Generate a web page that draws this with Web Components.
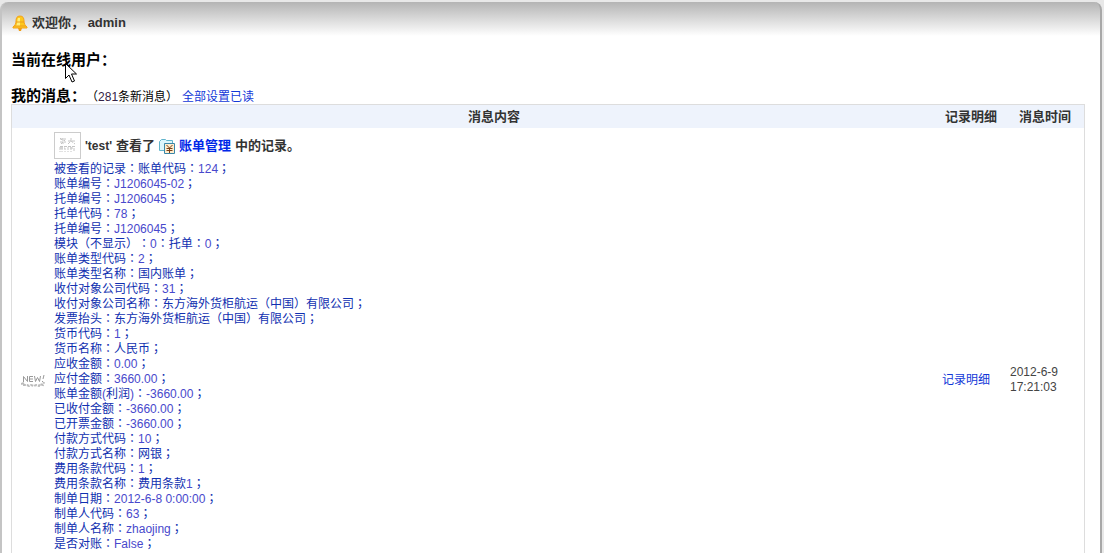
<!DOCTYPE html>
<html lang="zh-CN">
<head>
<meta charset="utf-8">
<title>我的消息</title>
<style>
  body {
    margin: 0;
    background: #e8e8e8;
    font: 12px/15px "Liberation Sans", "Noto Sans CJK SC", sans-serif;
    text-spacing-trim: space-all;
    color: #333;
  }
</style>
</head>
<body>
<user-panel name="admin">
  <online-users></online-users>
  <message-list></message-list>
</user-panel>
<mouse-pointer></mouse-pointer>

<script>
class BellIcon extends HTMLElement {
    constructor() {
        super();
        this.attachShadow({ mode: "open" }).innerHTML = `
        <style>
          :host { display: block; width: 16px; height: 16px; }
          svg { display: block; }
        </style>
        <svg width="16" height="16" viewBox="0 0 16 16">
          <path d="M8 1C5 1 4 3 4 6c0 3-1 4-3 6v1h14v-1c-2-2-3-3-3-6 0-3-1-5-4-5z" fill="#fdc81e" stroke="#f3a21c"/>
          <path d="M6 3c-1 2 0 5-2 8h4V3z" fill="#fff07a"/>
          <path d="M4 7h8M2 11h12" stroke="#ef9d1c" fill="none"/>
          <path d="M6 13h4l-1 3H7z" fill="#f09c14"/>
        </svg>`;
    }
}

class UserPanel extends HTMLElement {
    constructor() {
        super();
        this.attachShadow({ mode: "open" });
    }

    connectedCallback() {
        this.shadowRoot.innerHTML = `
        <style>
          :host {
            display: block;
            box-sizing: border-box;
            min-height: calc(100vh - 2px);
            margin: 2px 2px 0 0;
            padding: 0 15px 0 9px;
            border-left: 2px solid #c4c4c4;
            border-right: 2px solid #a8a8a8;
            border-radius: 8px 8px 0 0;
            background: linear-gradient(#b4b4b4, #fff 34px);
          }
          header {
            display: flex;
            align-items: center;
            gap: 4px;
            height: 42px;
            padding-left: 1px;
          }
          h1 { margin: 0; font-size: 13px; line-height: 20px; }
        </style>
        <header>
          <bell-icon></bell-icon>
          <h1>欢迎你， <span>${this.getAttribute("name")}</span></h1>
        </header>
        <slot></slot>`;
    }
}

class OnlineUsers extends HTMLElement {
    constructor() {
        super();
        this.attachShadow({ mode: "open" }).innerHTML = `
        <style>
          :host { display: block; height: 42px; }
          h2 { margin: 0; padding-top: 6px; font-size: 15px; line-height: 20px; color: #000; }
        </style>
        <h2>当前在线用户：</h2>`;
    }
}

class MessageList extends HTMLElement {
    constructor() {
        super();
        this.attachShadow({ mode: "open" });
    }

    // numbers and latin words are lighter, full width punctuation is centred
    markup(text) {
        return text
            .replace(/[：；（）]|[-\w.():]+(?: [\w:]+)?/g, part =>
                /[：；（）]/.test(part)
                    ? `<i lang="zh-TW">${part}</i>`
                    : `<span>${part}</span>`);
    }

    connectedCallback() {
        const records = [
            "被查看的记录：账单代码：124；",
            "账单编号：J1206045-02；",
            "托单编号：J1206045；",
            "托单代码：78；",
            "托单编号：J1206045；",
            "模块（不显示）：0：托单：0；",
            "账单类型代码：2；",
            "账单类型名称：国内账单；",
            "收付对象公司代码：31；",
            "收付对象公司名称：东方海外货柜航运（中国）有限公司；",
            "发票抬头：东方海外货柜航运（中国）有限公司；",
            "货币代码：1；",
            "货币名称：人民币；",
            "应收金额：0.00；",
            "应付金额：3660.00；",
            "账单金额(利润)：-3660.00；",
            "已收付金额：-3660.00；",
            "已开票金额：-3660.00；",
            "付款方式代码：10；",
            "付款方式名称：网银；",
            "费用条款代码：1；",
            "费用条款名称：费用条款1；",
            "制单日期：2012-6-8 0:00:00；",
            "制单人代码：63；",
            "制单人名称：zhaojing；",
            "是否对账：False；"
        ];
        const lines = records.map(text => `<div>${this.markup(text)}</div>`).join("");

        this.shadowRoot.innerHTML = `
        <style>
          :host { display: block; }
          a { color: #1238d8; text-decoration: none; }
          i { font-family: "Noto Sans CJK TC", sans-serif; font-style: normal; line-height: 1; }
          .title { display: flex; align-items: baseline; height: 18px; color: #000; }
          h2 { margin: 0; font-size: 15px; line-height: 20px; }
          .count { margin-right: 4px; }
          .count span { color: #324; }
          table {
            width: 100%;
            border: 1px solid #ddd;
            border-spacing: 0;
            table-layout: fixed;
          }
          th { height: 23px; padding: 0; background: #eef3fc; font-size: 13px; }
          td { box-sizing: border-box; padding: 4px 2px 80px; }
          .flag { width: 40px; }
          .link { width: 70px; }
          .time { width: 78px; }
          td.flag { padding: 0 0 0 9px; }
          td.link { padding: 0 0 0 6px; }
          td.time { padding: 0 0 0 4px; color: #444; }
          .record { color: #1030b0; }
          .record span { color: #4848cc; }
          .summary {
            display: flex;
            align-items: center;
            gap: 4px;
            margin-bottom: 3px;
            font-size: 13px;
            font-weight: bold;
            line-height: 26px;
          }
          .summary b { font-size: 12px; }
          .summary a { color: #0028e8; }
        </style>
        <div class="title">
          <h2>我的消息：</h2>
          <div class="count">${this.markup("（281条新消息）")}</div>
          <a href="#read">全部设置已读</a>
        </div>
        <table>
          <thead>
            <tr>
              <th class="flag"></th>
              <th>消息内容</th>
              <th class="link">记录明细</th>
              <th class="time">消息时间</th>
            </tr>
          </thead>
          <tbody>
            <tr>
              <td class="flag"><new-badge></new-badge></td>
              <td>
                <div class="summary">
                  <user-photo></user-photo>
                  <b>'test'</b>
                  <span>查看了</span>
                  <bill-icon></bill-icon>
                  <a href="#bill">账单管理</a>
                  <span>中的记录。</span>
                </div>
                <div class="record">${lines}</div>
              </td>
              <td class="link"><a href="#detail">记录明细</a></td>
              <td class="time">2012-6-9<br>17:21:03</td>
            </tr>
          </tbody>
        </table>`;
    }
}

class UserPhoto extends HTMLElement {
    constructor() {
        super();
        this.attachShadow({ mode: "open" }).innerHTML = `
        <style>
          :host { display: block; width: 25px; height: 25px; border: 1px solid #ccc; background: #fff; }
          svg { display: block; }
        </style>
        <svg width="25" height="25" viewBox="0 0 25 25" fill="none" stroke="#c4c4c4">
          <path d="M5 6h6M5 9h6M8 5v6M6 11l4-4M5 5l2 2M13 8h7M16 5v4M13 11l3-3 4 3M5 13.500h15M5 14v5M5 15h5v4M7 14v5M13 14v5M15 15h4v4M16 14v5" stroke-dasharray="3 1"/>
        </svg>`;
    }
}

class BillIcon extends HTMLElement {
    constructor() {
        super();
        this.attachShadow({ mode: "open" }).innerHTML = `
        <style>
          :host { display: block; width: 16px; height: 16px; }
          svg { display: block; }
        </style>
        <svg width="16" height="16" viewBox="0 0 16 16">
          <path d="M.5 3.500l2-2h4l1 1h6v10H.5z" fill="#dcf6fc" stroke="#62b4cc"/>
          <path d="M5.500 5.500h10v10h-10z" fill="#ffeccc" stroke="#3a86a8"/>
          <path d="M7.500 7l3 3 3-3M7.500 10.500h6M7.500 12.500h6M10.500 10v5" fill="none" stroke="#7a4018"/>
        </svg>`;
    }
}

class NewBadge extends HTMLElement {
    constructor() {
        super();
        this.attachShadow({ mode: "open" }).innerHTML = `
        <style>
          :host { display: block; width: 25px; height: 13px; }
          svg { display: block; }
        </style>
        <svg width="25" height="13" viewBox="0 0 25 13" fill="none">
          <path d="M0 10l3-1v2l3 0 2 1 2-1 3 1 2-1 3 1 1-2 3 1 1-3" stroke="#bbb" stroke-width="2" stroke-dasharray="3 1"/>
          <path d="M2.500 8V2.500l4 5V2M12 2.500H8.500v5H12M8.500 5H12M13.500 2l1 5.500 2-4 2 4 1-5.500M23 1l-1 4M21.500 7v1" stroke="#999"/>
        </svg>`;
    }
}

class MousePointer extends HTMLElement {
    constructor() {
        super();
        this.attachShadow({ mode: "open" }).innerHTML = `
        <style>
          :host { display: block; position: absolute; left: 65px; top: 63px; pointer-events: none; }
          svg { display: block; }
        </style>
        <svg width="13" height="21" viewBox="0 0 13 21">
          <path d="M.5.5v15l3.500-3.500 3 7 2.500-1-3-7h5z" fill="#fff" stroke="#000"/>
        </svg>`;
    }
}

customElements.define("bell-icon", BellIcon);
customElements.define("user-photo", UserPhoto);
customElements.define("bill-icon", BillIcon);
customElements.define("new-badge", NewBadge);
customElements.define("mouse-pointer", MousePointer);
customElements.define("online-users", OnlineUsers);
customElements.define("message-list", MessageList);
customElements.define("user-panel", UserPanel);
</script>
</body>
</html>
